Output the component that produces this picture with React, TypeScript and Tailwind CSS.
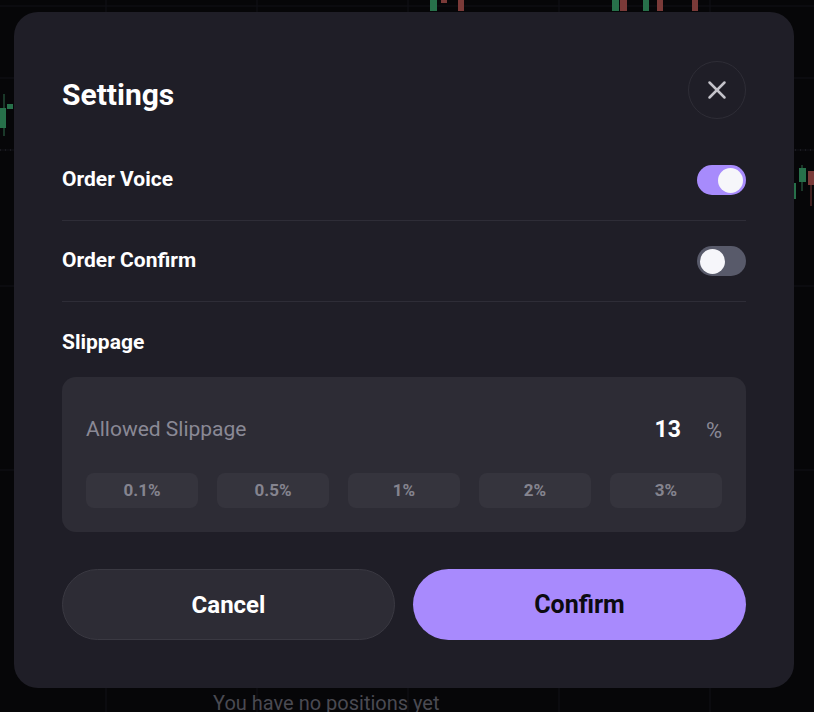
import { useState } from "react";
import { X } from "lucide-react";

const presets = ["0.1%", "0.5%", "1%", "2%", "3%"];

function Toggle({ on, onChange }: { on: boolean; onChange: () => void }) {
  return (
    <button
      onClick={onChange}
      className={`flex h-[30px] w-[49px] items-center rounded-full px-[3px] ${
        on ? "justify-end bg-[#a78bfc]" : "justify-start bg-[#585a6a]"
      }`}
    >
      <span className="block h-[25px] w-[25px] rounded-full bg-[#f6f6fa]" />
    </button>
  );
}

// faint chart behind the dialog
function ChartBackdrop() {
  return (
    <svg className="absolute inset-0" width="814" height="712">
      {[106, 257, 408, 559, 710].map((x) => (
        <line key={x} x1={x} y1="0" x2={x} y2="712" stroke="#111116" />
      ))}
      {[6, 78, 150, 286, 470].map((y) => (
        <line key={y} x1="0" y1={y} x2="814" y2={y} stroke="#111116" />
      ))}
      <line x1="0" y1="150" x2="814" y2="150" stroke="#2a2a30" strokeDasharray="1 4" />
      <line x1="4" y1="94" x2="4" y2="136" stroke="#2f6b4a" />
      <rect x="0" y="108" width="6" height="20" fill="#27704a" />
      <rect x="7" y="104" width="6" height="5" fill="#27704a" />
      <rect x="430" y="0" width="7" height="11" fill="#27704a" />
      <rect x="441" y="0" width="6" height="3" fill="#7a3a38" />
      <rect x="458" y="0" width="6" height="11" fill="#7a3a38" />
      <rect x="612" y="0" width="7" height="11" fill="#27704a" />
      <rect x="620" y="0" width="7" height="11" fill="#7a3a38" />
      <rect x="643" y="0" width="6" height="11" fill="#27704a" />
      <rect x="657" y="0" width="6" height="11" fill="#7a3a38" />
      <rect x="692" y="0" width="6" height="11" fill="#7a3a38" />
      <rect x="794" y="183" width="2" height="16" fill="#27704a" />
      <line x1="802" y1="165" x2="802" y2="191" stroke="#2f6b4a" />
      <rect x="799" y="168" width="7" height="14" fill="#27704a" />
      <line x1="811" y1="185" x2="811" y2="206" stroke="#7a3a38" />
      <rect x="808" y="171" width="6" height="14" fill="#7a3a38" />
    </svg>
  );
}

export default function App() {
  const [voice, setVoice] = useState(true);
  const [confirm, setConfirm] = useState(false);
  const [slippage, setSlippage] = useState("13");

  return (
    <div className="relative h-[712px] w-[814px] overflow-hidden bg-[#060608] font-['Roboto',sans-serif]">
      <ChartBackdrop />
      <div className="absolute left-[213px] top-[690px] text-[20px] leading-[26px] text-[#4a4a52]">
        You have no positions yet
      </div>

      <div className="absolute left-[14px] top-[12px] flex h-[676px] w-[780px] flex-col rounded-[24px] bg-[#1f1e27] px-12 pt-[49px] pb-12">
        <div className="flex h-[58px] items-center justify-between">
          <h2 className="pt-[10px] text-[30px] font-bold leading-[36px] text-white">Settings</h2>
          <button className="flex h-[58px] w-[58px] items-center justify-center rounded-full border-[1.5px] border-[#2e2d36] text-[#c4c3ca]">
            <X size={30} strokeWidth={2} />
          </button>
        </div>

        <div className="mt-[21px] flex h-[81px] items-center justify-between border-b border-[#2e2d37]">
          <span className="text-[21px] font-bold text-white">Order Voice</span>
          <Toggle on={voice} onChange={() => setVoice(!voice)} />
        </div>
        <div className="flex h-[81px] items-center justify-between border-b border-[#2e2d37]">
          <span className="text-[21px] font-bold text-white">Order Confirm</span>
          <Toggle on={confirm} onChange={() => setConfirm(!confirm)} />
        </div>

        <div className="pt-[28px] text-[21px] font-bold leading-[24px] text-white">Slippage</div>

        <div className="mt-[23px] rounded-[14px] bg-[#2d2c35] px-6 pt-[36px] pb-6">
          <div className="flex h-[34px] items-center justify-between">
            <span className="text-[21px] text-[#8a8995]">Allowed Slippage</span>
            <div className="flex items-center gap-[25px]">
              <input
                value={slippage}
                onChange={(e) => setSlippage(e.target.value)}
                className="w-[60px] bg-transparent text-right text-[23px] font-bold text-white outline-none"
              />
              <span className="text-[22px] text-[#8a8995]">%</span>
            </div>
          </div>
          <div className="mt-[26px] grid grid-cols-5 gap-[19px]">
            {presets.map((p) => (
              <button
                key={p}
                onClick={() => setSlippage(p.replace("%", ""))}
                className="h-[35px] rounded-[8px] bg-[#35343d] text-[17px] font-bold text-[#85848f]"
              >
                {p}
              </button>
            ))}
          </div>
        </div>

        <div className="mt-[37px] grid grid-cols-2 gap-[18px]">
          <button className="h-[71px] rounded-full border border-[#3a3942] bg-[#2d2c35] text-[24px] font-bold text-white">
            Cancel
          </button>
          <button className="h-[71px] rounded-full bg-[#a88afd] text-[25px] font-bold text-[#0c0b10]">
            Confirm
          </button>
        </div>
      </div>
    </div>
  );
}
